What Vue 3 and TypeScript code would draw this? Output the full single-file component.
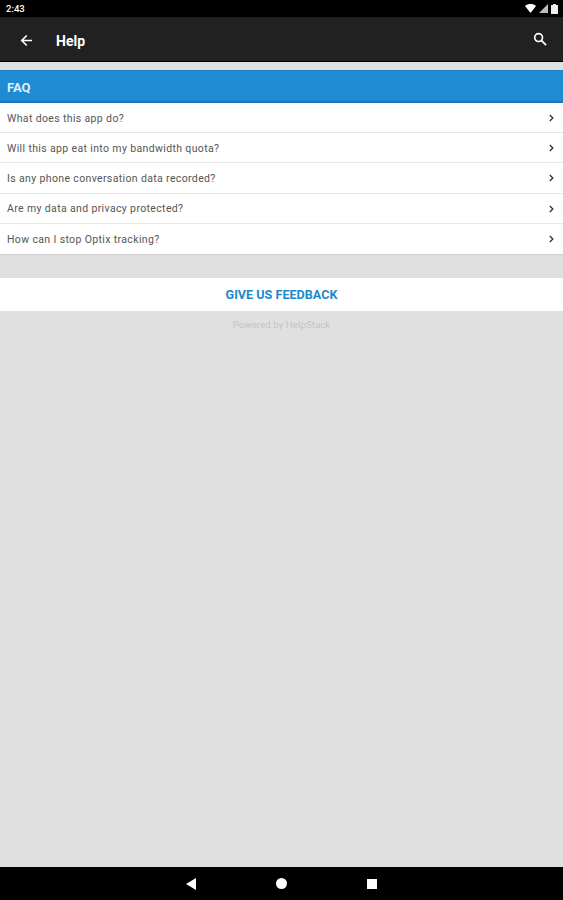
<script setup lang="ts">
const questions: string[] = [
  'What does this app do?',
  'Will this app eat into my bandwidth quota?',
  'Is any phone conversation data recorded?',
  'Are my data and privacy protected?',
  'How can I stop Optix tracking?'
]
</script>

<template>
  <div class="screen">
    <div class="status-bar">
      <span class="status-bar__time">2:43</span>
      <div class="status-bar__icons">
        <svg width="11" height="9" viewBox="0 0 13 10" preserveAspectRatio="none"><path d="M0 2.2C3.8-.7 9.2-.7 13 2.2L6.5 10z" fill="#fff" /></svg>
        <svg width="9" height="9" viewBox="0 0 11 10" preserveAspectRatio="none"><path d="M11 0v10H0z" fill="#bdbdbd" /></svg>
        <svg width="7" height="10" viewBox="0 0 7 11" preserveAspectRatio="none"><path d="M2 0h3v1h2v10H0V1h2z" fill="#eee" /></svg>
      </div>
    </div>

    <header class="toolbar">
      <svg class="toolbar__back" width="13" height="13" viewBox="0 0 14 14">
        <path d="M13 7H2.5M7.3 1.6 1.9 7l5.4 5.4" fill="none" stroke="#fff" stroke-width="1.8" />
      </svg>
      <span class="toolbar__title">Help</span>
      <svg class="toolbar__search" width="14" height="14" viewBox="0 0 15 15">
        <circle cx="6" cy="6" r="4.2" fill="none" stroke="#fff" stroke-width="1.8" />
        <path d="M9.2 9.2 14 14" stroke="#fff" stroke-width="2" />
      </svg>
    </header>

    <main class="content">
      <section class="faq">
        <h2 class="faq__heading">FAQ</h2>
        <ul class="faq__list">
          <li v-for="question in questions" :key="question" class="faq__row">
            <span>{{ question }}</span>
            <svg width="5" height="8" viewBox="0 0 6 9">
              <path d="M1 .8 4.6 4.5 1 8.2" fill="none" stroke="#333" stroke-width="1.6" />
            </svg>
          </li>
        </ul>
      </section>

      <div class="feedback">GIVE US FEEDBACK</div>
      <p class="powered">Powered by HelpStack</p>
    </main>

    <nav class="nav-bar">
      <svg width="10" height="12" viewBox="0 0 11 12" preserveAspectRatio="none"><path d="M11 0v12L0 6z" fill="#fff" /></svg>
      <svg width="11" height="11" viewBox="0 0 11 11"><circle cx="5.5" cy="5.5" r="5.5" fill="#fff" /></svg>
      <svg width="10" height="10" viewBox="0 0 10 10"><rect width="10" height="10" fill="#fff" /></svg>
    </nav>
  </div>
</template>

<style>
html,
body {
  margin: 0;
  background: #e0e0e0;
}
</style>

<style scoped>
.screen {
  display: flex;
  flex-direction: column;
  width: 563px;
  height: 900px;
  overflow: hidden;
  font-family: Roboto, "Liberation Sans", sans-serif;
  background: #e0e0e0;
}

.status-bar {
  display: flex;
  align-items: center;
  justify-content: space-between;
  flex-shrink: 0;
  height: 17px;
  padding: 0 5px 0 6px;
  background: #000;
  color: #fff;
}

.status-bar__time {
  font-size: 9.5px;
  font-weight: 500;
}

.status-bar__icons {
  display: flex;
  align-items: center;
  gap: 3px;
}

.toolbar {
  display: flex;
  align-items: center;
  flex-shrink: 0;
  box-sizing: border-box;
  height: 44px;
  padding: 2px 16px 0 20px;
  background: #212121;
  color: #fff;
}

.toolbar__title {
  margin-left: 23px;
  margin-top: 2px;
  font-size: 14px;
  font-weight: 700;
}

.toolbar__search {
  margin-left: auto;
  margin-top: -2px;
}

.content {
  flex: 1;
  padding-top: 9px;
  box-shadow: inset 0 1px 0 #000;
}

.faq {
  background: #fff;
  border-bottom: 1px solid #cfcfcf;
}

.faq__heading {
  margin: 0;
  height: 33px;
  padding: 0 7px;
  border-top: 1px solid #1b7fc0;
  border-bottom: 2px solid #1a78b8;
  box-sizing: border-box;
  background: #1e8bd3;
  color: #dff0fb;
  font-size: 13px;
  font-weight: 700;
  line-height: 33px;
}

.faq__list {
  margin: 0;
  padding: 0;
  list-style: none;
}

.faq__row {
  display: flex;
  align-items: center;
  justify-content: space-between;
  box-sizing: border-box;
  height: 30.2px;
  padding: 1px 9px 0 7px;
  border-bottom: 1px solid #e6e6e6;
  color: #555;
  font-size: 10.5px;
  letter-spacing: 0.36px;
}

.faq__row:last-child {
  border-bottom: 0;
}

.feedback {
  margin-top: 23px;
  height: 33px;
  background: #fff;
  color: #1e88c9;
  font-size: 12.6px;
  font-weight: 700;
  line-height: 34px;
  text-align: center;
}

.powered {
  margin: 8px 0 0;
  color: #c4c4c4;
  font-size: 9.8px;
  text-align: center;
}

.nav-bar {
  display: flex;
  align-items: center;
  justify-content: center;
  gap: 80px;
  flex-shrink: 0;
  height: 33px;
  padding-right: 1px;
  background: #000;
}
</style>
